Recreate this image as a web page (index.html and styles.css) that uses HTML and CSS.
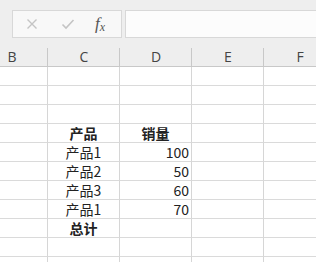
FILE: index.html
```html
<!DOCTYPE html>
<html>

<head>
    <title>Sheet</title>
    <meta charset="utf-8">
    <link rel="stylesheet" href="styles.css">
</head>

<body>
    <div class="toolbar">
        <div class="formula-tools">
            <svg class="tool-icon" width="12" height="12" viewBox="0 0 12 12">
                <path d="M1.5 1.5 L10.5 10.5 M10.5 1.5 L1.5 10.5" stroke="#c4c4c4" stroke-width="1.4" fill="none"/>
            </svg>
            <svg class="tool-icon" width="14" height="12" viewBox="0 0 14 12">
                <path d="M1.5 6.5 L5 10 L12.5 2" stroke="#c4c4c4" stroke-width="1.6" fill="none"/>
            </svg>
            <span class="fx">f<sub>x</sub></span>
        </div>
        <div class="formula-input"></div>
    </div>

    <div class="sheet-wrap">
        <div class="sheet">
            <div class="col-head">B</div>
            <div class="col-head">C</div>
            <div class="col-head">D</div>
            <div class="col-head">E</div>
            <div class="col-head">F</div>

            <!-- rows 1-3 empty -->
            <div class="cell"></div><div class="cell"></div><div class="cell"></div><div class="cell"></div><div class="cell"></div>
            <div class="cell"></div><div class="cell"></div><div class="cell"></div><div class="cell"></div><div class="cell"></div>
            <div class="cell"></div><div class="cell"></div><div class="cell"></div><div class="cell"></div><div class="cell"></div>

            <div class="cell"></div><div class="cell center bold">产品</div><div class="cell center bold">销量</div><div class="cell"></div><div class="cell"></div>
            <div class="cell"></div><div class="cell center">产品1</div><div class="cell num">100</div><div class="cell"></div><div class="cell"></div>
            <div class="cell"></div><div class="cell center">产品2</div><div class="cell num">50</div><div class="cell"></div><div class="cell"></div>
            <div class="cell"></div><div class="cell center">产品3</div><div class="cell num">60</div><div class="cell"></div><div class="cell"></div>
            <div class="cell"></div><div class="cell center">产品1</div><div class="cell num">70</div><div class="cell"></div><div class="cell"></div>
            <div class="cell"></div><div class="cell center bold">总计</div><div class="cell"></div><div class="cell"></div><div class="cell"></div>

            <div class="cell"></div><div class="cell"></div><div class="cell"></div><div class="cell"></div><div class="cell"></div>
            <div class="cell"></div><div class="cell"></div><div class="cell"></div><div class="cell"></div><div class="cell"></div>
        </div>
    </div>
</body>

</html>
```

FILE: styles.css
```css
body {
    margin: 0;
    width: 316px;
    height: 262px;
    overflow: hidden;
    background-color: #ffffff;
    font-family: "Noto Sans CJK SC", "Noto Sans", sans-serif;
}

.toolbar {
    display: flex;
    gap: 3px;
    height: 28px;
    padding: 10px 0 0 12px;
    background-color: #eeeeee;
}

.formula-tools {
    display: flex;
    align-items: center;
    width: 108px;
    height: 26px;
    border: 1px solid #d8d8d8;
    background-color: #f8f8f8;
}

.tool-icon:first-child {
    margin-left: 13px;
}

.tool-icon + .tool-icon {
    margin-left: 23px;
}

.fx {
    margin-left: 20px;
    font-family: "Liberation Serif", serif;
    font-style: italic;
    font-size: 17px;
    color: #555555;
    line-height: 1;
}

.fx sub {
    font-size: 12px;
    vertical-align: -2px;
}

.formula-input {
    flex: 1;
    height: 26px;
    border: 1px solid #d8d8d8;
    border-right: none;
    background-color: #fcfcfc;
}

.sheet-wrap {
    width: 316px;
    height: 224px;
    overflow: hidden;
}

.sheet {
    display: grid;
    grid-template-columns: repeat(5, 72px);
    margin-left: -24px;
}

.col-head {
    height: 18px;
    padding-top: 10px;
    background-color: #eeeeee;
    border-bottom: 1px solid #c8c8c8;
    background-image: linear-gradient(#c8c8c8, #c8c8c8);
    background-size: 1px 18px;
    background-position: right bottom;
    background-repeat: no-repeat;
    text-align: center;
    font-family: "Open Sans", sans-serif;
    font-size: 14px;
    line-height: 18px;
    color: #444444;
}

.cell {
    height: 18px;
    border-right: 1px solid #d6d6d6;
    border-bottom: 1px solid #dadada;
    font-size: 14px;
    line-height: 18px;
    color: #222222;
    white-space: nowrap;
}

.center {
    text-align: center;
}

.num {
    text-align: right;
    padding-right: 2px;
}

.bold {
    font-weight: bold;
}
```
